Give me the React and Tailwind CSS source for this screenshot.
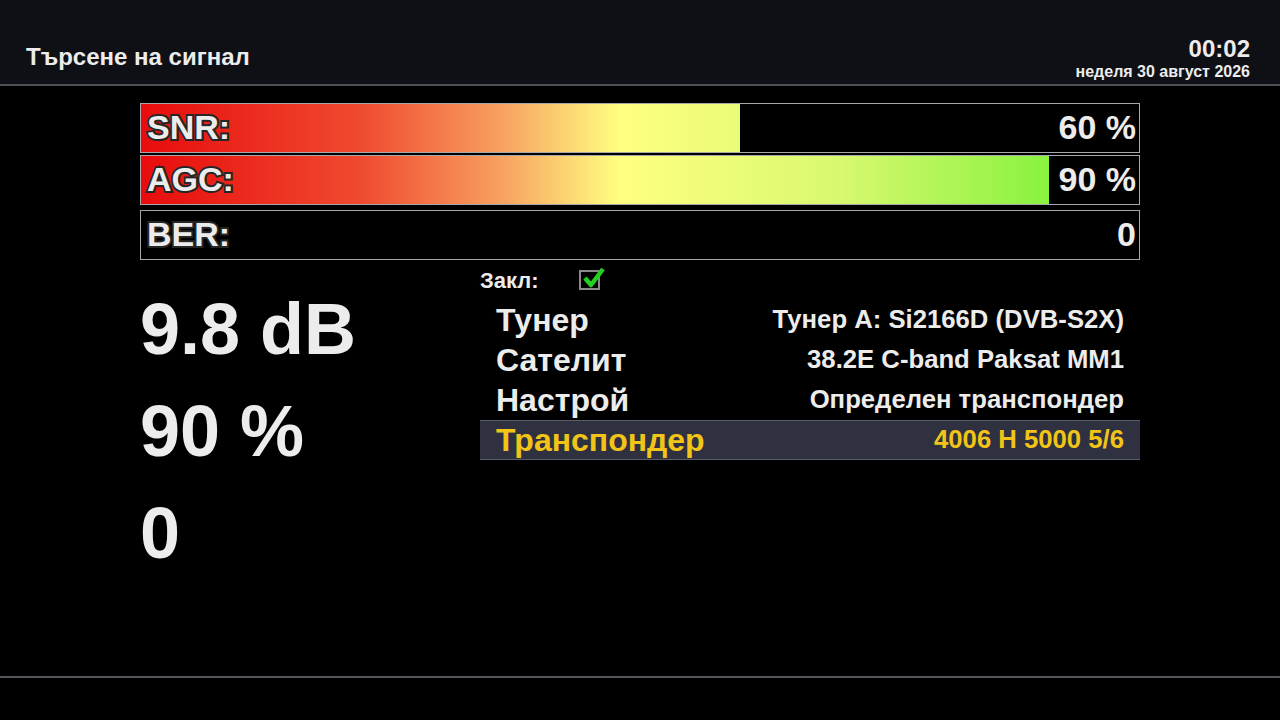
const bars = [
  { label: "SNR:", value: "60 %", pct: 60 },
  { label: "AGC:", value: "90 %", pct: 91 },
  { label: "BER:", value: "0", pct: 0 },
];

const rows = [
  { name: "Тунер", value: "Тунер A: Si2166D (DVB-S2X)" },
  { name: "Сателит", value: "38.2E C-band Paksat MM1" },
  { name: "Настрой", value: "Определен транспондер" },
  { name: "Транспондер", value: "4006 H 5000 5/6", active: true },
];

function Bar({ label, value, pct }) {
  return (
    <div className="relative h-[50px] border border-[#a8a8a8] bg-black">
      <div className="absolute inset-y-0 left-0 overflow-hidden" style={{ width: `${pct}%` }}>
        <div className="h-full w-[998px] bg-[linear-gradient(to_right,#e80c0c_0%,#ef4a30_22%,#f7a060_36%,#ffff80_48%,#d8f870_70%,#66f02a_100%)]" />
      </div>
      <div className="relative flex h-full items-center justify-between pb-[3px] pl-[6px] pr-[3px]">
        <span className="text-[34px] font-bold leading-none text-[#ececec] [paint-order:stroke_fill] [-webkit-text-stroke:4px_#262626]">
          {label}
        </span>
        <span className="text-[34px] font-bold leading-none text-[#ececec]">{value}</span>
      </div>
    </div>
  );
}

function Check() {
  return (
    <div className="relative ml-[40px] h-[20px] w-[21px] border-2 border-[#8a8a8a]">
      <svg viewBox="0 0 24 24" className="absolute -top-[6px] left-[1px] h-[24px] w-[24px]">
        <path d="M3 12 L9 19 L21 3" fill="none" stroke="#22d01e" strokeWidth="4.5" strokeLinejoin="round" />
      </svg>
    </div>
  );
}

export default function App() {
  return (
    <div className="flex h-[720px] w-[1280px] flex-col overflow-hidden bg-black font-['Liberation_Sans',Arial,sans-serif] text-[#ececec]">
      <header className="flex h-[86px] items-end justify-between border-b-2 border-[#4c4d55] bg-[#0f1016] px-[30px] pb-[4px] pl-[26px]">
        <h1 className="pb-[11px] text-[24px] font-bold leading-none">Търсене на сигнал</h1>
        <div className="flex flex-col items-end">
          <span className="text-[24px] font-bold leading-none">00:02</span>
          <span className="mt-[3px] text-[16px] font-bold leading-none">неделя 30 август 2026</span>
        </div>
      </header>

      <main className="flex-1 px-[140px] pt-[17px]">
        <div className="flex w-[1000px] flex-col gap-[2px]">
          {bars.slice(0, 2).map((b) => (
            <Bar key={b.label} {...b} />
          ))}
          <div className="mt-[3px]">
            <Bar {...bars[2]} />
          </div>
        </div>

        <div className="mt-[8px] flex">
          <div className="flex w-[340px] flex-col pt-[10px] text-[72px] font-bold leading-[102px]">
            <span>9.8 dB</span>
            <span>90 %</span>
            <span>0</span>
          </div>
          <div className="flex w-[660px] flex-col">
            <div className="flex h-[24px] items-center text-[22px] font-bold">
              <span>Закл:</span>
              <Check />
            </div>
            <div className="mt-[8px] flex flex-col">
              {rows.map((r) => (
                <div
                  key={r.name}
                  className={
                    r.active
                      ? "flex h-[40px] items-center justify-between border-t border-b border-[#5a5c68] bg-[#2f3140] px-[16px] text-[#f2c417]"
                      : "flex h-[40px] items-center justify-between px-[16px]"
                  }
                >
                  <span className="text-[32px] font-bold leading-none">{r.name}</span>
                  <span className="text-[25.7px] font-bold leading-none">{r.value}</span>
                </div>
              ))}
            </div>
          </div>
        </div>
      </main>

      <footer className="mb-[42px] h-[2px] bg-[#55565c]" />
    </div>
  );
}
